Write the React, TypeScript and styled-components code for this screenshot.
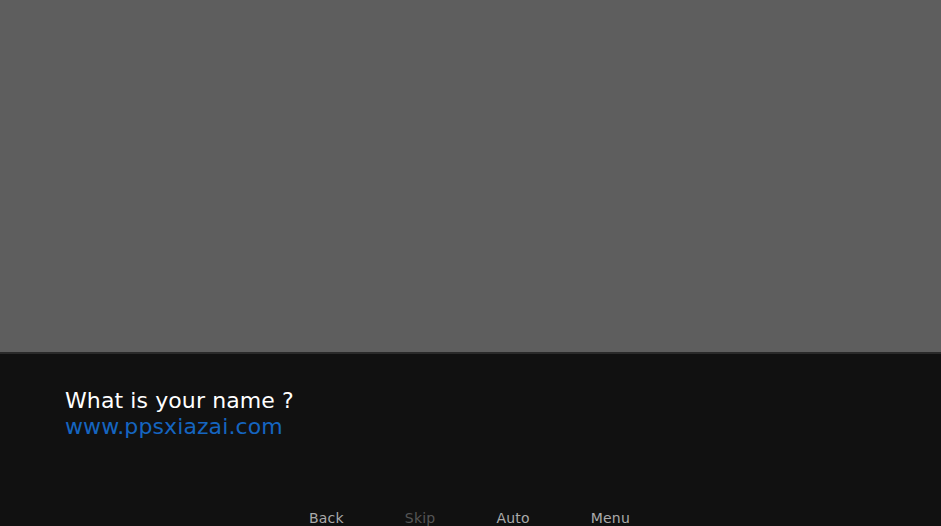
import React from "react";
import styled, { createGlobalStyle } from "styled-components";

const GlobalStyle = createGlobalStyle`
  html, body {
    margin: 0;
    padding: 0;
    background: #111;
    overflow: hidden;
  }
  body {
    font-family: "DejaVu Sans", "Liberation Sans", sans-serif;
  }
`;

const Screen = styled.div`
  width: 941px;
  height: 526px;
  display: flex;
  flex-direction: column;
  overflow: hidden;
`;

const Scene = styled.div`
  height: 352px;
  background: #5e5e5e;
`;

const TextBox = styled.div`
  flex: 1;
  background: #111;
  border-top: 2px solid #2a2a2a;
  display: flex;
  flex-direction: column;
  padding: 34px 0 0 65px;
  box-sizing: border-box;
`;

const Line = styled.div<{ $color: string }>`
  font-size: 22px;
  line-height: 26px;
  letter-spacing: 0.1px;
  color: ${(p) => p.$color};
`;

const QuickMenu = styled.div`
  margin-top: auto;
  margin-left: -65px;
  display: flex;
  justify-content: center;
  gap: 61px;
  padding-right: 2px;
  height: 18px;
`;

const MenuButton = styled.div<{ $disabled?: boolean }>`
  font-size: 14px;
  line-height: 18px;
  letter-spacing: 0.2px;
  color: ${(p) => (p.$disabled ? "#555" : "#aaa")};
  transform: translateY(1px);
`;

export default function App() {
  return (
    <Screen>
      <GlobalStyle />
      <Scene />
      <TextBox>
        <Line $color="#ffffff">What is your name ?</Line>
        <Line $color="#1565c0">www.ppsxiazai.com</Line>
        <QuickMenu>
          <MenuButton>Back</MenuButton>
          <MenuButton $disabled>Skip</MenuButton>
          <MenuButton>Auto</MenuButton>
          <MenuButton>Menu</MenuButton>
        </QuickMenu>
      </TextBox>
    </Screen>
  );
}
